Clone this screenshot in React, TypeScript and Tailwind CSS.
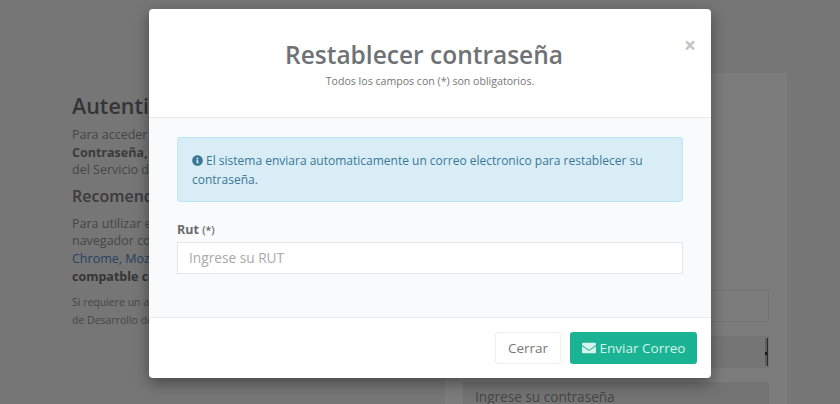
import { FaEnvelope, FaInfoCircle } from "react-icons/fa"

function LoginPage() {
  return (
    <div className="flex h-[404px] overflow-hidden bg-[#ececec] pl-[72px] pt-[73px] text-[#8c8c8c]">
      <div className="w-[373px] shrink-0 pt-[18px]">
        <h2 className="text-[21.5px] leading-[30px] font-semibold text-[#6a6a6a]">Autenticación</h2>
        <p className="mt-[5px] text-[12.5px] leading-[17.6px]">
          Para acceder al sistema ingrese su RUT y
          <br />
          <b className="text-[#777]">Contraseña,</b> los datos son los mismos
          <br />
          del Servicio de Impuestos
        </p>
        <h3 className="mt-[5px] text-[16px] leading-[24px] font-semibold text-[#757575]">Recomendaciones</h3>
        <p className="mt-[7px] text-[12.5px] leading-[17.6px]">
          Para utilizar el sistema necesita un
          <br />
          navegador como Google
          <br />
          <span className="text-[#4f84c4]">Chrome, Mozilla Firefox</span>
          <br />
          <b className="text-[#6a6a6a]">compatble con HTML5</b>
        </p>
        <p className="mt-[8px] text-[10.5px] leading-[18px]">
          Si requiere un acceso contacte al equipo
          <br />
          de Desarrollo del sistema
        </p>
      </div>
      <div className="h-full w-[342px] shrink-0 bg-[#f8f8f8] px-[18px] pt-[217px]">
        <div className="h-[32px] border border-[#e5e6e7]" />
        <div className="mt-[14px] flex h-[32px] justify-end border border-[#e5e6e7] bg-[#eaeaea] py-[1px]">
          <div className="relative h-full w-[3px] border-r border-[#555] bg-[#bbb]">
            <div className="absolute top-[14px] left-0 h-[3px] w-[2px] bg-[#333]" />
          </div>
        </div>
        <div className="mt-[14px] h-[32px] bg-[#e6e6e6] px-[12px] text-[13.6px] leading-[30px] text-[#8c8c8c]">
          Ingrese su contraseña
        </div>
      </div>
    </div>
  )
}

function ResetModal() {
  return (
    <div className="absolute inset-0 bg-black/50 pt-[9px] pl-[149px]">
      <div className="h-[369px] w-[562px] overflow-hidden rounded-[4px] bg-white shadow-[0_5px_15px_rgba(0,0,0,0.4)]">
        <div className="relative h-[109px] border-b border-[#e7eaec] pt-[29px] text-center">
          <span className="absolute top-[26px] right-[15px] text-[21px] leading-[21px] font-bold text-[#c4c4c4]">×</span>
          <h4 className="pr-[12px] text-[24.5px] leading-[33px] font-semibold text-[#6f7274]">Restablecer contraseña</h4>
          <p className="mt-[2px] text-[10.6px] leading-[16px] text-[#777]">Todos los campos con (*) son obligatorios.</p>
        </div>
        <div className="h-[200px] border-b border-[#e7eaec] bg-[#f8fafb] px-[28px] pt-[19px]">
          <div className="h-[65px] rounded-[3px] border border-[#bce8f1] bg-[#d9edf7] px-[14px] pt-[14px] text-[12px] leading-[18.6px] text-[#3a7896]">
            <FaInfoCircle className="mr-[3px] inline-block h-[11px] w-[11px] align-[-1px]" />
            El sistema enviara automaticamente un correo electronico para restablecer su contraseña.
          </div>
          <label className="mt-[20px] block text-[12.5px] leading-[16px] font-bold text-[#676a6c]">
            Rut <span className="text-[10.5px] font-semibold">(*)</span>
          </label>
          <div className="mt-[4px] h-[32px] border border-[#e5e6e7] bg-white px-[11px] text-[13.7px] leading-[30px] text-[#a9a9a9]">
            Ingrese su RUT
          </div>
        </div>
        <div className="flex justify-end gap-[9px] px-[14px] pt-[14px]">
          <button className="h-[32px] w-[66px] rounded-[3px] border border-[#eee] bg-white text-[13.5px] text-[#777]">Cerrar</button>
          <button className="flex h-[32px] w-[127px] items-center justify-center gap-[4px] rounded-[3px] bg-[#1ab394] text-[13.5px] text-[#d8f2ec]">
            <FaEnvelope className="h-[14px] w-[14px]" />
            Enviar Correo
          </button>
        </div>
      </div>
    </div>
  )
}

export default function App() {
  return (
    <div className="relative h-[404px] overflow-hidden font-['Open_Sans',sans-serif]">
      <LoginPage />
      <ResetModal />
    </div>
  )
}
